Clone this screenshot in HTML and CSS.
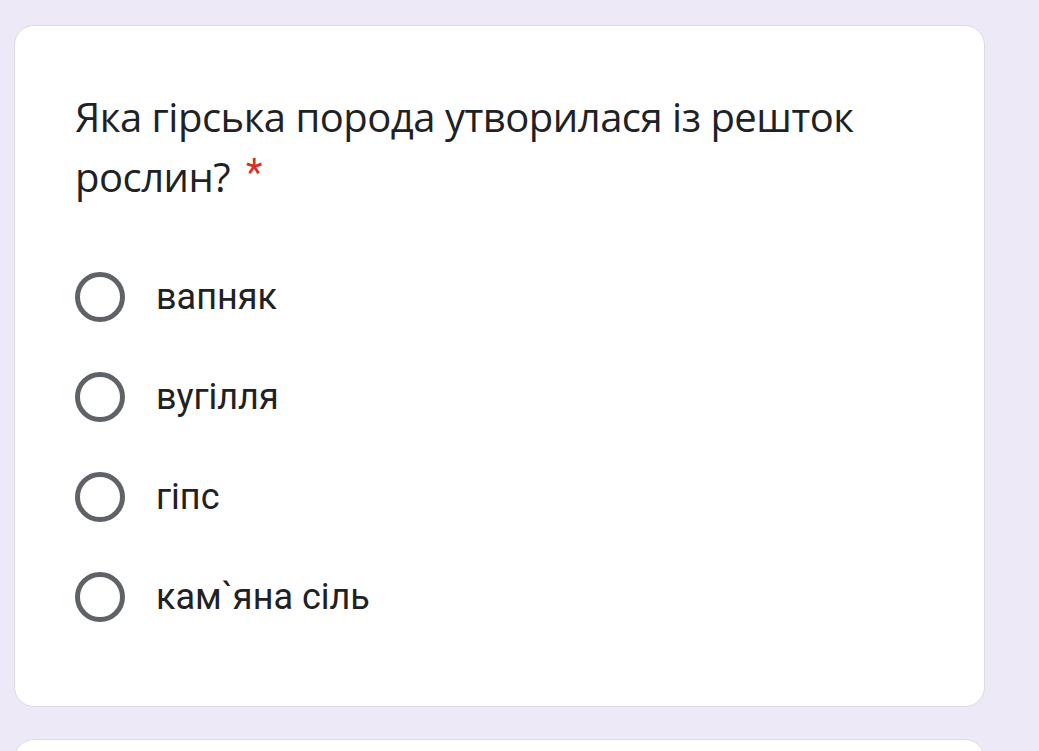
FILE: index.html
```html
<!DOCTYPE html>
<html lang="uk">
<head>
<meta charset="utf-8">
<link rel="stylesheet" href="styles.css">
</head>
<body>
<div class="page">
  <div class="card">
    <div class="question">Яка гірська порода утворилася із решток рослин?<span class="req">*</span></div>
    <div class="options">
      <label class="option"><span class="radio"></span><span class="opt-text">вапняк</span></label>
      <label class="option"><span class="radio"></span><span class="opt-text">вугілля</span></label>
      <label class="option"><span class="radio"></span><span class="opt-text">гіпс</span></label>
      <label class="option"><span class="radio"></span><span class="opt-text">кам`яна сіль</span></label>
    </div>
  </div>
  <div class="card next"></div>
</div>
</body>
</html>
```
FILE: styles.css
```css
html, body {
  margin: 0;
  padding: 0;
  background: #ede9f7;
  height: 100%;
  overflow: hidden;
}
.page {
  padding: 25px 0 0 14px;
  display: flex;
  flex-direction: column;
  gap: 32px;
}
.card {
  box-sizing: border-box;
  width: 971px;
  background: #fff;
  border: 1px solid #dadce0;
  border-radius: 20px;
  padding: 61px 60px 59px 60px;
}
.card.next {
  height: 200px;
}
.question {
  font-family: "Open Sans", Roboto, sans-serif;
  font-size: 40px;
  letter-spacing: -0.5px;
  line-height: 60px;
  color: #202124;
  width: 800px;
}
.req {
  display: inline-block;
  margin-left: 16px;
  font-family: Roboto, sans-serif;
  color: #d93025;
  font-size: 38px;
  line-height: 30px;
  vertical-align: 6px;
}
.options {
  margin-top: 40px;
  display: flex;
  flex-direction: column;
}
.option {
  height: 100px;
  display: flex;
  align-items: center;
  gap: 31px;
}
.radio {
  box-sizing: border-box;
  width: 50px;
  height: 50px;
  border: 5px solid #5f6368;
  border-radius: 50%;
  flex: none;
}
.opt-text {
  font-family: Roboto, sans-serif;
  font-size: 36px;
  color: #202124;
}
```
